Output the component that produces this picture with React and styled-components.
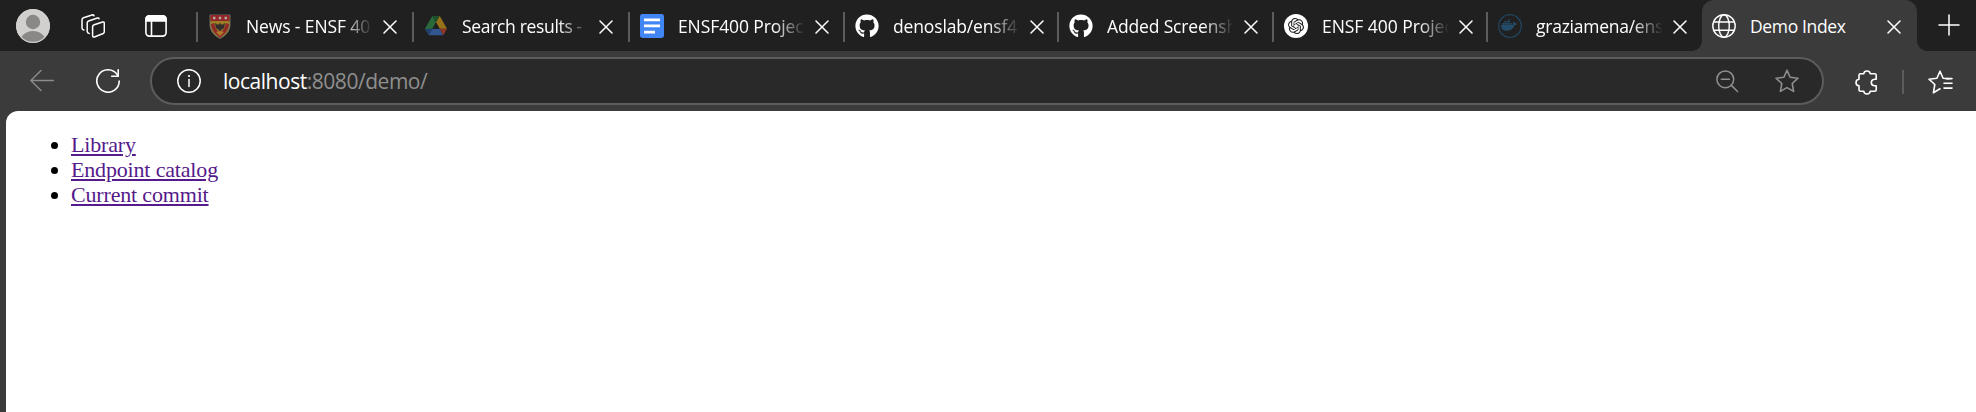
import React from 'react';
import styled, { createGlobalStyle } from 'styled-components';
import { SiOpenai, SiDocker } from 'react-icons/si';
import { FaGithub } from 'react-icons/fa';

const GlobalStyle = createGlobalStyle`
  * { box-sizing: border-box; }
  body { margin: 0; background: #3b3b3b; overflow: hidden; }
  svg { display: block; flex: none; }
`;

const Browser = styled.div`
  display: flex;
  flex-direction: column;
  width: 1976px;
  height: 412px;
  background: #3b3b3b;
  font-family: 'Open Sans', 'Noto Sans', sans-serif;
  color: #fff;
`;

const TabStrip = styled.header`
  display: flex;
  align-items: center;
  height: 51px;
  flex: none;
  background: #202020;
`;

const WindowTools = styled.div`
  display: flex;
  align-items: center;
  width: 196px;
  flex: none;
  padding-left: 16px;
  gap: 31px;
`;

const PaneButton = styled.div`
  margin-left: 9px;
`;

const Tab = styled.div`
  position: relative;
  display: flex;
  align-items: center;
  flex: none;
  width: ${(p) => p.$width}px;
  height: 51px;
  padding-left: 10px;
  background: ${(p) => (p.$active ? '#3b3b3b' : 'transparent')};
  border-radius: ${(p) => (p.$active ? '12px 12px 0 0' : 0)};
  &::before, &::after {
    content: '';
    display: ${(p) => (p.$active ? 'block' : 'none')};
    position: absolute;
    bottom: 0;
    width: 10px;
    height: 10px;
  }
  &::before { left: -10px; background: radial-gradient(circle at 0 0, transparent 9.5px, #3b3b3b 10.2px); }
  &::after { right: -10px; background: radial-gradient(circle at 100% 0, transparent 9.5px, #3b3b3b 10.2px); }
`;

const TabDivider = styled.span`
  width: 2px;
  height: 30px;
  flex: none;
  margin-top: 2px;
  background: #5c5c5c;
`;

const Favicon = styled.span`
  display: flex;
  align-items: center;
  justify-content: center;
  width: 24px;
  height: 24px;
  flex: none;
  margin-top: 1px;
`;

const TabTitle = styled.span`
  width: 126px;
  flex: none;
  margin-left: 14px;
  font-size: 17.5px;
  line-height: 26px;
  letter-spacing: ${(p) => p.$spacing}px;
  white-space: nowrap;
  ${(p) => p.$fade && 'mask-image: linear-gradient(to right, #000 96px, transparent 127px);'}
`;

const CloseButton = styled.span`
  margin: 2px 0 0 11px;
`;

const NewTab = styled.div`
  margin: -1px 0 0 21px;
`;

const Toolbar = styled.nav`
  display: flex;
  align-items: center;
  height: 60px;
  flex: none;
  padding-left: 30px;
`;

const ReloadSlot = styled.div`
  margin: 0 30px 0 42px;
`;

const AddressBar = styled.div`
  display: flex;
  align-items: center;
  width: 1674px;
  height: 48px;
  flex: none;
  padding: 0 23px 0 25px;
  border: 2px solid #5c5c5c;
  border-radius: 24px;
  background: #292929;
`;

const Url = styled.span`
  flex: 1;
  margin-left: 22px;
  font-size: 21px;
  line-height: 30px;
  letter-spacing: -0.47px;
  color: #8f8f8f;
`;

const Host = styled.span`
  color: #fff;
`;

const AddressActions = styled.div`
  display: flex;
  align-items: center;
  gap: 36px;
`;

const Extensions = styled.div`
  display: flex;
  align-items: center;
  margin-left: 31px;
  padding-top: 2px;
`;

const ToolDivider = styled.span`
  width: 2px;
  height: 24px;
  margin: 0 24px;
  background: #5c5c5c;
`;

const Page = styled.main`
  flex: 1;
  margin-left: 6px;
  padding: 21px 11px;
  background: #fff;
  border-top-left-radius: 12px;
  font-family: 'Liberation Serif', 'Times New Roman', serif;
  font-size: 22px;
  line-height: 25px;
  letter-spacing: -0.17px;
  color: #000;
`;

const LinkList = styled.ul`
  margin: 0;
  padding-left: 54px;
`;

const PageLink = styled.a`
  color: #551a8b;
  text-decoration: underline;
`;

const line = { fill: 'none', stroke: 'currentColor', strokeLinecap: 'round', strokeLinejoin: 'round' };

const Avatar = () => (
  <svg width="34" height="34" viewBox="0 0 34 34">
    <defs><clipPath id="face"><circle cx="17" cy="17" r="17" /></clipPath></defs>
    <g clipPath="url(#face)">
      <rect width="34" height="34" fill="#d2d0ce" />
      <circle cx="17" cy="13" r="7.2" fill="#8a8886" />
      <ellipse cx="17" cy="32.5" rx="12.5" ry="10.5" fill="#8a8886" />
      <circle cx="17" cy="17" r="16.4" fill="none" stroke="#d2d0ce" strokeWidth="1.2" />
    </g>
  </svg>
);

const Workspaces = () => (
  <svg width="24" height="24" viewBox="0 0 24 24" {...line} strokeWidth="1.5">
    <path d="M13.2 10.8L21.6 8Q23.3 7.5 23.3 9.2V17.8Q23.3 19 22.2 19.5L13.4 23Q11.6 23.5 11.6 21.8V12.8Q11.6 11.4 13.2 10.8Z" />
    <path d="M18 4.8Q17.7 3.6 16.4 4L7.6 7Q6.2 7.5 6.2 9V17.5Q6.2 19.2 8.2 19.5" />
    <path d="M13 1.8Q12.5 .5 11 1L2.5 3.8Q1 4.4 1 6V14Q1 15.6 2.8 16" />
  </svg>
);

const VerticalTabs = () => (
  <svg width="22" height="22" viewBox="0 0 22 22" {...line} strokeWidth="1.6">
    <rect x=".9" y=".9" width="20.2" height="20.2" rx="3.5" />
    <path d="M1 6V4Q1 1 4 1H18Q21 1 21 4V6Z" fill="currentColor" />
    <path d="M6.5 6V21" />
  </svg>
);

const Shield = () => (
  <svg width="22" height="25" viewBox="0 0 22 25">
    <path d="M1 1H21V12Q20 20 11 24.5Q2 20 1 12Z" fill="#8b7428" stroke="#777" strokeWidth=".8" />
    <path d="M1.4 1H20.6V7H1.4Z" fill="#91272b" />
    <path d="M4 2.8H6.4V5.2H4ZM9.8 2.8H12.2V5.2H9.8ZM15.6 2.8H18V5.2H15.6Z" fill="#b5aaa0" />
    <path d="M2 10Q3 17 8 21L11 24L14 21Q19 17 20 10L17 9Q16 16 11 19Q6 16 5 9Z" fill="#91272b" />
    <path d="M2 7.5H20V10L18 9L11 10L4 9L2 10Z" fill="#a48224" />
    <path d="M6 9L9 11L11 9L13 11L16 9L15 14L12 16L11 18L10 16L7 14Z" fill="#33302b" />
    <path d="M7 18L11 17L15 18L11 22Z" fill="#b07a28" />
  </svg>
);

const Drive = () => (
  <svg width="22" height="20" viewBox="0 0 22 20">
    <path d="M7.3 0H14.7L11 6.4Z" fill="#1c5029" />
    <path d="M7.3 0L0 12.7L3.7 19L11 6.4Z" fill="#296a38" />
    <path d="M14.7 0L22 12.8H14.7L11 6.4Z" fill="#987219" />
    <path d="M7.3 12.8H14.7L18.3 19.2H3.7Z" fill="#31558f" />
    <path d="M0 12.8H7.3L3.7 19.2Z" fill="#233f70" />
    <path d="M14.7 12.8H22L18.3 19.2Z" fill="#923629" />
    <path d="M11 6.5L14.6 12.8H7.4Z" fill="#202020" />
  </svg>
);

const Docs = () => (
  <svg width="24" height="24" viewBox="0 0 24 24">
    <rect width="24" height="24" rx="2.4" fill="#4285f4" />
    <path d="M4 4.5H20V7.2H4ZM4 10.6H20V13.3H4ZM4 16.8H15V19.5H4Z" fill="#fff" />
  </svg>
);

const OpenAi = () => (
  <svg width="24" height="24" viewBox="0 0 24 24">
    <circle cx="12" cy="12" r="12" fill="#fff" />
    <SiOpenai x="4" y="4" width="16" height="16" color="#202020" />
  </svg>
);

const Docker = () => (
  <svg width="24" height="24" viewBox="0 0 24 24">
    <circle cx="12" cy="12" r="11.3" fill="none" stroke="#21455e" strokeWidth="1.3" />
    <SiDocker x="3" y="3" width="18" height="18" color="#244c68" />
  </svg>
);

const Globe = () => (
  <svg width="24" height="24" viewBox="0 0 24 24" {...line} strokeWidth="1.4">
    <circle cx="12" cy="12" r="11.2" />
    <ellipse cx="12" cy="12" rx="5.3" ry="11.2" />
    <path d="M1.8 8H22.2M1.8 16.2H22.2" />
  </svg>
);

const Close = () => (
  <svg width="14" height="14" viewBox="0 0 14 14" {...line} strokeWidth="1.5">
    <path d="M1 1L13 13M13 1L1 13" />
  </svg>
);

const Plus = () => (
  <svg width="22" height="22" viewBox="0 0 22 22" {...line} strokeWidth="1.5">
    <path d="M11 1V21M1 11H21" />
  </svg>
);

const Back = () => (
  <svg width="24" height="24" viewBox="0 0 24 24" {...line} strokeWidth="1.4" color="#8c8c8c">
    <path d="M11 1.5L.8 11.5L11 21.5M.8 11.5H23.5" />
  </svg>
);

const Reload = () => (
  <svg width="24" height="24" viewBox="0 0 24 24" {...line} strokeWidth="1.6">
    <path d="M23.2 12A11.2 11.2 0 1 1 21.2 5.6L22 7" />
    <path d="M22.2 .8V7.3H15.7" />
  </svg>
);

const Info = () => (
  <svg width="24" height="24" viewBox="0 0 24 24" {...line} strokeWidth="1.5">
    <circle cx="12" cy="12" r="11.2" />
    <path d="M12 10.5V17.5" />
    <circle cx="12" cy="7" r="1.1" fill="currentColor" stroke="none" />
  </svg>
);

const ZoomOut = () => (
  <svg width="23" height="23" viewBox="0 0 23 23" {...line} strokeWidth="1.5" color="#8f8f8f">
    <circle cx="9.3" cy="9.3" r="8.4" />
    <path d="M5.3 9.3H13.3M15.4 15.4L21.5 21.5" />
  </svg>
);

const Star = () => (
  <svg width="24" height="24" viewBox="0 0 24 24" {...line} strokeWidth="1.6" color="#8f8f8f">
    <path d="M12 1.2L15.1 8.2L23 9.2L17.2 14.5L18.6 22.4L12 18.6L5.4 22.4L6.8 14.5L1 9.2L8.9 8.2Z" />
  </svg>
);

const Puzzle = () => (
  <svg width="23" height="25" viewBox="0 0 23 25" {...line} strokeWidth="1.6">
    <path d="M4 5.2Q4 3.7 5.5 3.7H8.8Q9 1 12 1Q15 1 15.2 3.7H19.7Q21.2 3.7 21.2 5.2V9.2H19.5Q16.3 9.5 16.3 12.5Q16.3 15.5 19.5 15.8H21.2V19.8Q21.2 21.3 19.7 21.3H15.2Q15 24 12 24Q9 24 8.8 21.3H5.5Q4 21.3 4 19.8V15.8Q1 15.5 1 12.5Q1 9.5 4 9.2Z" />
  </svg>
);

const Favorites = () => (
  <svg width="25" height="24" viewBox="0 0 25 24" {...line} strokeWidth="1.6">
    <path d="M21 8.8L15.1 8.2L12 1.2L8.9 8.2L1 9.2L6.8 14.5L5.4 22.8L12 18.8" />
    <path d="M18 8.6H24M16 13.3H24M16 18.1H24" />
  </svg>
);

const github = <FaGithub size={24} />;

const tabs = [
  { title: 'News - ENSF 40', icon: <Shield />, width: 216, spacing: -0.12 },
  { title: 'Search results -', icon: <Drive />, width: 216, spacing: -0.33 },
  { title: 'ENSF400 Projec', icon: <Docs />, width: 215, spacing: -0.1 },
  { title: 'denoslab/ensf4', icon: github, width: 214, spacing: -0.15 },
  { title: 'Added Screensh', icon: github, width: 215, spacing: -0.15 },
  { title: 'ENSF 400 Projec', icon: <OpenAi />, width: 214, spacing: -0.05 },
  { title: 'graziamena/ens', icon: <Docker />, width: 216, spacing: -0.25 },
  { title: 'Demo Index', icon: <Globe />, width: 215, spacing: -0.35, active: true },
];

const links = ['Library', 'Endpoint catalog', 'Current commit'];

export default function App() {
  return (
    <Browser>
      <GlobalStyle />
      <TabStrip>
        <WindowTools>
          <Avatar />
          <Workspaces />
          <PaneButton><VerticalTabs /></PaneButton>
        </WindowTools>
        {tabs.map((tab) => (
          <React.Fragment key={tab.title}>
            {!tab.active && <TabDivider />}
            <Tab $width={tab.active ? tab.width : tab.width - 2} $active={tab.active}>
              <Favicon>{tab.icon}</Favicon>
              <TabTitle $spacing={tab.spacing} $fade={!tab.active}>{tab.title}</TabTitle>
              <CloseButton><Close /></CloseButton>
            </Tab>
          </React.Fragment>
        ))}
        <NewTab><Plus /></NewTab>
      </TabStrip>
      <Toolbar>
        <Back />
        <ReloadSlot><Reload /></ReloadSlot>
        <AddressBar>
          <Info />
          <Url><Host>localhost</Host>:8080/demo/</Url>
          <AddressActions><ZoomOut /><Star /></AddressActions>
        </AddressBar>
        <Extensions><Puzzle /><ToolDivider /><Favorites /></Extensions>
      </Toolbar>
      <Page>
        <LinkList>
          {links.map((text) => (
            <li key={text}><PageLink href="#">{text}</PageLink></li>
          ))}
        </LinkList>
      </Page>
    </Browser>
  );
}
